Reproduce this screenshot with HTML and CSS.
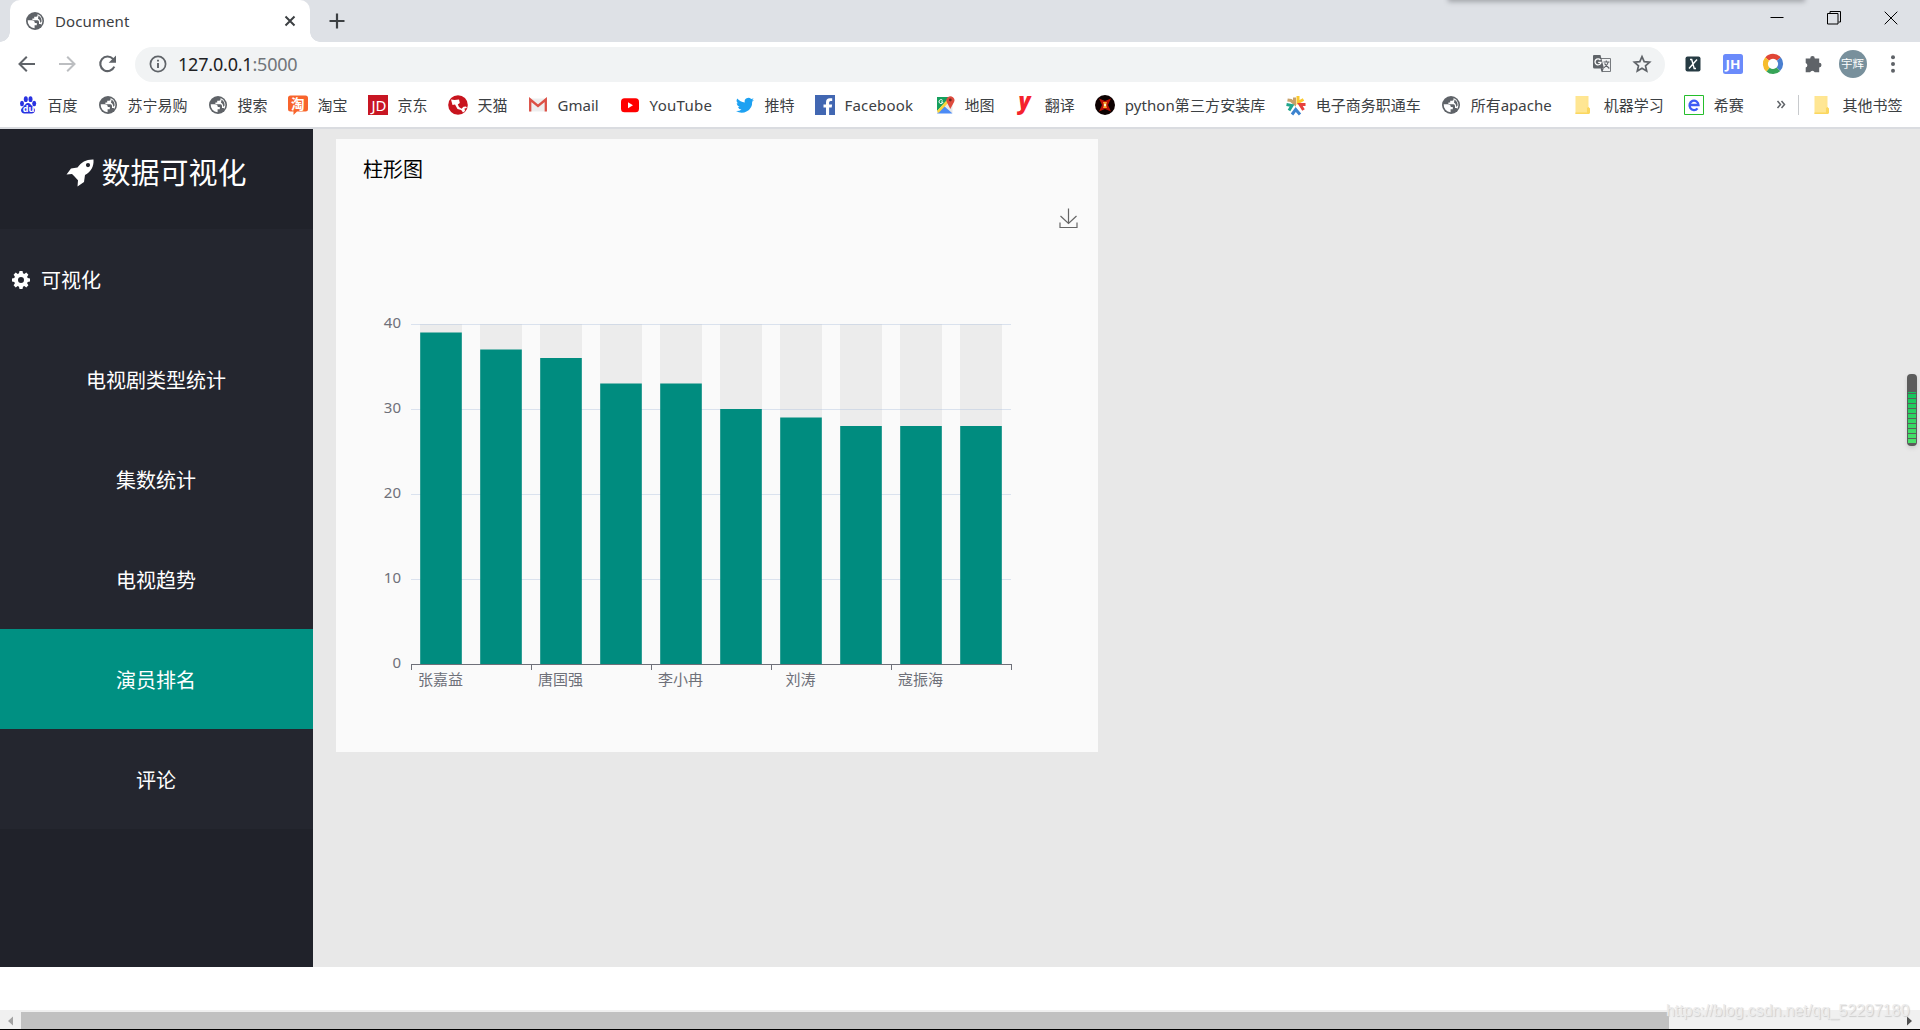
FILE: index.html
```html
<!DOCTYPE html>
<html lang="zh-CN">
<head>
<meta charset="utf-8">
<title>Document</title>
<link rel="stylesheet" href="styles.css">
</head>
<body>
<svg class="defs" width="0" height="0">
  <symbol id="globe" viewBox="0 0 20 20">
    <circle cx="10" cy="10" r="9" fill="#5f6368"/>
    <path d="M2.700 9.300H6.500Q9.800 9.300 9.800 12H11.800V14.300H9.600V17.300A7.400 7.400 0 0 1 2.700 9.300Z" fill="#fff"/>
    <path d="M12.600 3.100V4.200Q12.600 5.800 10.800 5.800H9.200V7.600H7.400V9.300H12.400Q14 9.300 14 11V13H15.600L16.200 14A7.400 7.400 0 0 0 12.600 3.100Z" fill="#fff"/>
    <path d="M13.500 4.500Q16.800 6.500 16.600 10.500L15.300 12Q15 8.200 13 7.800z" fill="#5f6368"/>
  </symbol>
  <symbol id="folder" viewBox="0 0 20 20">
    <path d="M1.500 1h13v11.500l1.500 1.500v4l-1.500 1h-13z" fill="#ffe58f"/>
    <path d="M1.500 17.500h11.500v-4.500l1.500-1 1.500 1.500v4.200l-1 1.300H1.500z" fill="#fbd75f"/>
    <path d="M2.500 16.800H12V1.500H2.500z" fill="#ffe693"/>
  </symbol>
</svg>

<div class="window">
  <header class="tabs">
    <div class="tab">
      <svg class="ic20"><use href="#globe"/></svg>
      <span class="tab-title">Document</span>
      <svg class="tab-close" viewBox="0 0 12 12"><path d="M1.500 1.500l9 9M10.500 1.500l-9 9" stroke="#3c4043" stroke-width="2"/></svg>
    </div>
    <svg class="tab-new" viewBox="0 0 16 16"><path d="M8 .5v15M.5 8h15" stroke="#3c4043" stroke-width="2.200"/></svg>
    <div class="controls">
      <svg viewBox="0 0 14 14"><path d="M.5 6.500h13" stroke="#000"/></svg>
      <svg viewBox="0 0 14 14"><path d="M.5 2.500h10.500v10.500H.5zM3 2V.5h10.500v10.500H11.500" stroke="#000" fill="none"/></svg>
      <svg viewBox="0 0 14 14"><path d="M.7.7l12.600 12.600M13.300.7L.7 13.300" stroke="#000"/></svg>
    </div>
    <div class="top-shadow"></div>
  </header>

  <div class="toolbar">
    <svg class="nav" viewBox="0 0 20 20"><path d="M18 10H3M9.800 2.700L2.500 10l7.300 7.300" stroke="#5f6368" stroke-width="2" fill="none"/></svg>
    <svg class="nav" viewBox="0 0 20 20"><path d="M2 10h15M10.200 2.700L17.500 10l-7.300 7.300" stroke="#bcbec1" stroke-width="2" fill="none"/></svg>
    <svg class="nav" viewBox="0 0 20 20"><path d="M17.300 12.700A7.300 7.300 0 1 1 16 4.900L17.500 6.700" stroke="#5f6368" stroke-width="2.100" fill="none"/><path d="M19 1.500v7.300h-7.300z" fill="#5f6368"/></svg>
    <div class="omnibox">
      <svg class="info" viewBox="0 0 18 18"><circle cx="9" cy="9" r="7.600" stroke="#5f6368" stroke-width="1.700" fill="none"/><path d="M9 8v5M9 4.700v1.800" stroke="#5f6368" stroke-width="1.900"/></svg>
      <span class="url">127.0.0.1<i>:5000</i></span>
      <svg class="translate" viewBox="0 0 20 20"><path d="M8 4.500h10.500v13H10z" fill="#f1f3f4" stroke="#777a7e"/><path d="M1.500 1h7l3.500 13.500H2.500q-1.500 0-1.500-1.500V2z" fill="#5f6368"/><path d="M8.500 14.500h3.300l-1.800 4z" fill="#5f6368"/><path d="M8.400 6A3 3 0 1 0 9 8.300H6.200" fill="none" stroke="#fff" stroke-width="1.300"/><path d="M11.500 8h6M14.300 6.500V8M16.300 8q-.8 3.500-4.300 5.700M12.500 9.500l4.800 5" fill="none" stroke="#5f6368" stroke-width="1.100"/></svg>
      <svg class="star" viewBox="0 0 20 20"><path d="M10 2.700l2.200 5 5.400.5-4.100 3.600 1.200 5.300L10 14.300l-4.700 2.800 1.200-5.300-4.100-3.600 5.400-.5z" fill="none" stroke="#5f6368" stroke-width="1.700"/></svg>
    </div>
    <div class="extensions">
      <svg viewBox="0 0 20 20"><rect x="2.500" y="2.500" width="15" height="15" rx="2" fill="#263b43"/><path d="M7 5.500h1.700l2.500 9H13M14 5.500L6 14.500" stroke="#fff" stroke-width="1.400" fill="none"/></svg>
      <svg viewBox="0 0 20 20"><rect width="20" height="20" rx="2.500" fill="#6b8bfb"/><text x="2.500" y="15" textLength="15" lengthAdjust="spacingAndGlyphs" class="jh">JH</text></svg>
      <svg viewBox="0 0 20 20" fill="none" stroke-width="5"><path d="M4.200 5A7.500 7.500 0 0 1 15.800 5" stroke="#e04637"/><path d="M15.800 5A7.500 7.500 0 0 1 15.300 15.300" stroke="#4a7fd0"/><path d="M15.300 15.300A7.500 7.500 0 0 1 5 15.600" stroke="#37a457"/><path d="M5 15.600A7.500 7.500 0 0 1 4.200 5" stroke="#f6bd2c"/></svg>
      <svg viewBox="0 0 20 20"><path d="M2 5.200h4.500a2.300 2.300 0 1 1 4.600 0H15.500v4.400a2.300 2.300 0 1 1 0 4.600V19H11a2.500 2.500 0 0 0-4.600 0H2v-4.600a2.500 2.500 0 0 0 0-4.700z" transform="translate(.7 -.8)" fill="#5f6368"/></svg>
      <span class="avatar">宇辉</span>
      <svg class="dots" viewBox="0 0 20 20" fill="#5f6368"><circle cx="10" cy="3.300" r="2"/><circle cx="10" cy="10" r="2"/><circle cx="10" cy="16.800" r="2"/></svg>
    </div>
  </div>

  <nav class="bookmarks">
    <a><svg viewBox="0 0 20 20" fill="#2932e1"><ellipse cx="4" cy="8.500" rx="2" ry="2.700"/><ellipse cx="7.800" cy="4.200" rx="2" ry="2.900"/><ellipse cx="12.500" cy="4.200" rx="2" ry="2.900"/><ellipse cx="16.200" cy="8.500" rx="2" ry="2.700"/><path d="M10 8c2 0 3 2 4.500 3.500 2.500 2.300 3 3.500 2 5.500-1.200 2-3.500 1.500-6.500 1.500S4.700 19 3.500 17c-1-2-.5-3.200 2-5.500C7 10 8 8 10 8z"/><text x="4.800" y="17" class="du">du</text></svg><span>百度</span></a>
    <a><svg><use href="#globe"/></svg><span>苏宁易购</span></a>
    <a><svg><use href="#globe"/></svg><span>搜索</span></a>
    <a><svg viewBox="0 0 20 20"><path d="M2.500.5h15Q20 .5 20 3v11q0 2.500-2.500 2.500H9L5.500 20v-3.500h-3Q0 16.500 0 14V3Q0 .5 2.500.5z" fill="#f8642c"/><text x="3" y="13.500" class="tao">淘</text></svg><span>淘宝</span></a>
    <a><svg viewBox="0 0 20 20"><path d="M0 0h20v20H0z" fill="#c81623"/><text x="3.500" y="15.500" textLength="15" lengthAdjust="spacingAndGlyphs" class="jd">JD</text></svg><span>京东</span></a>
    <a><svg viewBox="0 0 20 20"><circle cx="10" cy="10" r="9.800" fill="#c8141e"/><path d="M3 4.500l3.500.5 4.500-.5.800 3.500-2 1.500 1.200 2.500 2.500 1.700 2-2 2.500-.3 1 1.500-2.500.5.500 2.500-2 1.500-1.800-2.500L9.500 14 7 9.500 4.500 10z" fill="#fff"/></svg><span>天猫</span></a>
    <a><svg viewBox="0 0 20 20"><path d="M1.500 3.500h17v13h-17z" fill="#eee"/><path d="M2.200 16.500V4.500L10 11l7.800-6.500v12" fill="none" stroke="#dc5045" stroke-width="2.300"/></svg><span class="w-gmail">Gmail</span></a>
    <a><svg viewBox="0 0 20 20"><rect x="1" y="3.200" width="18" height="14" rx="3.500" fill="#f00"/><path d="M8 7.200v6l5-3z" fill="#fff"/></svg><span class="w-youtube">YouTube</span></a>
    <a><svg viewBox="0 0 24 24"><path d="M22.800 5.600a9 9 0 0 1-2.600.7 4.500 4.500 0 0 0 2-2.500 9 9 0 0 1-2.800 1.100A4.400 4.400 0 0 0 11.800 9 12.600 12.600 0 0 1 2.700 4.300a4.400 4.400 0 0 0 1.400 6 4.400 4.400 0 0 1-2-.6c0 2.200 1.500 4 3.500 4.500a4.400 4.400 0 0 1-2 .1 4.400 4.400 0 0 0 4.200 3A9 9 0 0 1 1.200 19.200 12.600 12.600 0 0 0 20.600 8a9 9 0 0 0 2.200-2.400z" fill="#1da1f2"/></svg><span>推特</span></a>
    <a><svg viewBox="0 0 20 20"><path d="M0 0h20v20H0z" fill="#4267b2"/><path d="M11 20v-7.500H8.500v-3H11V7.300q0-4 4-4h2.200V6h-1.600q-1.500 0-1.500 1.500v2h3l-.4 3h-2.600V20z" fill="#fff"/></svg><span class="w-facebook">Facebook</span></a>
    <a><svg viewBox="0 0 20 20"><path d="M2 2h15.500v16H2z" fill="#e8e8e8"/><path d="M2 2h13L2 16z" fill="#159f5d"/><path d="M2 18.500L9 11l8.500 7.500z" fill="#4c8bf5"/><path d="M2 16L12 5l2 2L3.500 18z" fill="#fdd53b"/><path d="M15.300 14L12 7.500a4 4 0 1 1 6.800 0z" fill="#de4b3e"/><circle cx="15.300" cy="5" r="1.400" fill="#702820"/><path d="M7.700 5.500A2 2 0 1 0 8 7H6" stroke="#fff" fill="none"/></svg><span>地图</span></a>
    <a><svg viewBox="0 0 20 20"><text x="3.500" y="13.500" class="you">y</text></svg><span>翻译</span></a>
    <a><svg viewBox="0 0 20 20"><circle cx="10" cy="10" r="10" fill="#0d0202"/><path d="M4 3.500l6 2.500 6-2.500-3 6.500 3 6.500-6-2.500-6 2.500 3-6.500z" fill="#b71206"/><path d="M8 7h4l-1 3 1 3H8l1-3z" fill="#ffa329"/><circle cx="10" cy="10" r="1.300" fill="#fff6c0"/></svg><span class="w-python">python第三方安装库</span></a>
    <a><svg viewBox="0 0 20 20" fill="none" stroke-width="3"><path d="M1.500 5l3.500.5 3.500 3V2.500" stroke="#c7a16a"/><path d="M12 1v6.500l5.500-3" stroke="#fbc92e"/><path d="M19.500 9.500H14l3.500 5.500" stroke="#e7413c"/><path d="M.5 9.500l5.500 1-3 5" stroke="#20a58c"/><path d="M6 19.500l3.700-5 4.300 5" stroke="#3c83cf"/></svg><span>电子商务职通车</span></a>
    <a><svg><use href="#globe"/></svg><span class="w-apache">所有apache</span></a>
    <a class="tight"><svg><use href="#folder"/></svg><span>机器学习</span></a>
    <a><svg viewBox="0 0 20 20"><path d="M.5.500h19v19H.5z" fill="#fff" stroke="#25be2b"/><path d="M5.500 10H14.500A4.500 4.800 0 1 0 13.500 13.400" fill="none" stroke="#3e5cf5" stroke-width="2.300"/></svg><span>希赛</span></a>
    <svg class="more" viewBox="0 0 10 10"><path d="M1.500 1L4.500 4.500l-3 3.500M5.500 1L8.500 4.500l-3 3.500" fill="none" stroke="#5f6368" stroke-width="1.500"/></svg>
    <div class="divider"></div>
    <a><svg><use href="#folder"/></svg><span>其他书签</span></a>
  </nav>

  <div class="page">
    <aside class="sidebar">
      <h1 class="brand"><svg viewBox="0 0 28 28"><path d="M27.500.5C20 .3 15.500 3 11.500 8.500L5 9.500.5 15.500l5.500-.4 2.300 2.200 2.500 2.600 1.200 1.300-.5 6.300 6.500-4.500 1-7C25 12.500 28 8 27.500.5zM22 8.200a2.100 2.100 0 1 1 0-4.200 2.100 2.100 0 0 1 0 4.200z" fill="#fff" fill-rule="evenodd"/></svg><span>数据可视化</span></h1>
      <ul class="menu">
        <li class="group"><svg viewBox="0 0 18 18"><path fill="#fff" fill-rule="evenodd" d="M7.500 0h3l.5 2.300 1.300.6 2-1.300 2.100 2.100-1.300 2 .6 1.300 2.300.5v3l-2.300.5-.6 1.300 1.300 2-2.100 2.100-2-1.300-1.300.6-.5 2.300h-3L7 15.700l-1.300-.6-2 1.300-2.100-2.100 1.300-2-.6-1.300L0 10.500v-3L2.300 7l.6-1.300-1.300-2 2.100-2.100 2 1.300L7 2.300zM9 6a3 3 0 1 0 0 6 3 3 0 0 0 0-6z"/></svg>可视化</li>
        <li>电视剧类型统计</li>
        <li>集数统计</li>
        <li>电视趋势</li>
        <li class="active">演员排名</li>
        <li>评论</li>
      </ul>
    </aside>
    <main class="content">
      <section class="card">
        <h2>柱形图</h2>
        <svg class="chart" width="762" height="552" viewBox="336 200 762 552">
          <g fill="#ececec">
            <path d="M420 324h42v341h-42zM480 324h42v341h-42zM540 324h42v341h-42zM600 324h42v341h-42zM660 324h42v341h-42zM720 324h42v341h-42zM780 324h42v341h-42zM840 324h42v341h-42zM900 324h42v341h-42zM960 324h42v341h-42z"/>
          </g>
          <path d="M411 324.500h600M411 409.500h600M411 494.500h600M411 579.500h600" stroke="#b4c6e0" stroke-opacity=".45"/>
          <g fill="#008c7f">
            <rect x="420.200" y="332.500" width="41.600" height="332"/>
            <rect x="480.200" y="349.500" width="41.600" height="315"/>
            <rect x="540.200" y="358" width="41.600" height="307"/>
            <rect x="600.200" y="383.500" width="41.600" height="281"/>
            <rect x="660.200" y="383.500" width="41.600" height="281"/>
            <rect x="720.200" y="409" width="41.600" height="256"/>
            <rect x="780.200" y="417.500" width="41.600" height="247"/>
            <rect x="840.200" y="426" width="41.600" height="239"/>
            <rect x="900.200" y="426" width="41.600" height="239"/>
            <rect x="960.200" y="426" width="41.600" height="239"/>
          </g>
          <path d="M411 664.500h601M411.500 665v5M531.500 665v5M651.500 665v5M771.500 665v5M891.500 665v5M1011.500 665v5" stroke="#6e7079"/>
          <g class="axis" text-anchor="end">
            <text x="401" y="328">40</text><text x="401" y="413">30</text><text x="401" y="498">20</text><text x="401" y="583">10</text><text x="401" y="668">0</text>
          </g>
          <g class="axis names" text-anchor="middle">
            <text x="440.500" y="685">张嘉益</text><text x="560.500" y="685">唐国强</text><text x="680.500" y="685">李小冉</text><text x="800.500" y="685">刘涛</text><text x="920.500" y="685">寇振海</text>
          </g>
          <path d="M1068.500 208.500v15M1060.500 216l8 7.500 8-7.500M1060 222.500v5h17v-5" fill="none" stroke="#666" stroke-width="1.200"/>
        </svg>
      </section>
    </main>
  </div>

  <div class="below"></div>
  <div class="scrollbar">
    <svg viewBox="0 0 21 18"><path d="M13 4.500v9L8 9z" fill="#a3a3a3"/></svg>
    <div class="thumb"></div>
    <svg viewBox="0 0 21 18"><path d="M8 4.500v9l5-4.500z" fill="#505050"/></svg>
  </div>
  <div class="meter"><div></div></div>
  <div class="watermark">https://blog.csdn.net/qq_52297180</div>
</div>
</body>
</html>
```

FILE: styles.css
```css
* { box-sizing: border-box; }
body { margin: 0; overflow: hidden; font-family: "Noto Sans", "Noto Sans CJK SC", sans-serif; font-size: 15px; color: #3c4043; }
svg { display: block; flex: none; overflow: visible; }
.defs { position: absolute; }
.window { position: relative; width: 1920px; height: 1030px; display: flex; flex-direction: column; background: #fff; }

.tabs { position: relative; height: 42px; flex: none; background: #dee1e6; display: flex; padding-left: 10px; }
.tab { position: relative; width: 300px; background: #fff; border-radius: 10px 10px 0 0; display: flex; align-items: center; padding: 0 15px; }
.tab::before, .tab::after { content: ""; position: absolute; bottom: 0; width: 10px; height: 10px; }
.tab::before { left: -10px; background: radial-gradient(circle at 0 0, #dee1e6 9.5px, #fff 10px); }
.tab::after { right: -10px; background: radial-gradient(circle at 100% 0, #dee1e6 9.5px, #fff 10px); }
.ic20 { width: 20px; height: 20px; }
.tab-title { margin-left: 10px; flex: 1; font-size: 15px; letter-spacing: .1px; }
.tab-close { width: 12px; height: 12px; margin-right: -1px; }
.tab-new { width: 16px; height: 16px; margin: 13px 0 0 19px; }
.controls { margin-left: auto; display: flex; gap: 43px; padding: 11px 22px 0 0; }
.controls svg { width: 14px; height: 14px; }
.top-shadow { position: absolute; left: 1450px; top: -6px; width: 353px; height: 6px; box-shadow: 0 0 5px 2px #a2a5aa; }

.toolbar { height: 45px; flex: none; display: flex; align-items: center; padding: 0 0 1px 17px; }
.nav { width: 20px; height: 20px; margin-right: 20px; }
.omnibox { width: 1530px; height: 35px; border-radius: 18px; background: #f1f3f4; display: flex; align-items: center; padding: 0 13px 0 14px; margin-left: -2px; }
.info { width: 18px; height: 18px; }
.url { flex: 1; margin-left: 11px; font-size: 18px; color: #202124; letter-spacing: -.2px; }
.url i { font-style: normal; color: #70757a; }
.translate { width: 20px; height: 20px; margin-right: 20px; }
.star { width: 20px; height: 20px; }
.extensions { display: flex; align-items: center; gap: 20px; margin-left: 17.5px; }
.extensions svg { width: 20px; height: 20px; }
.avatar { width: 28px; height: 28px; border-radius: 50%; background: #78909c; color: #fff; font: 11.5px/27px "Noto Sans CJK SC", sans-serif; text-align: center; margin: 0 -4px; }
.jh { font: bold 13px "Noto Sans", sans-serif; fill: #fff; }

.bookmarks { height: 42px; flex: none; display: flex; align-items: center; gap: 20px; padding: 0 17px 4px 18px; border-bottom: 2px solid #dadce0; }
.bookmarks a { display: flex; align-items: center; gap: 10px; white-space: nowrap; line-height: 20px; }
.bookmarks a.tight { margin: 0 0 0 -1px; }
.bookmarks a svg { width: 20px; height: 20px; }
.bookmarks a span { font-size: 15px; margin: 0 .5px 0 -.5px; }
.bookmarks .w-gmail { width: 42px; }
.bookmarks .w-youtube { width: 65px; letter-spacing: .3px; }
.bookmarks .w-facebook { width: 70px; letter-spacing: .15px; }
.bookmarks .w-python { width: 141px; letter-spacing: .1px; }
.bookmarks .w-apache { width: 84px; }
.more { width: 10px; height: 10px; margin-left: auto; }
.divider { width: 1px; height: 20px; background: #c8cacd; margin: 0 -6.5px 0 -8px; }
.du { font: bold 9px "Noto Sans", sans-serif; fill: #fff; }
.tao { font: bold 13.5px "Noto Sans CJK SC", sans-serif; fill: #fff; }
.jd { font: 15px "Noto Sans", sans-serif; fill: #fff; }
.you { font: italic 900 22px "Open Sans", sans-serif; fill: #f5222d; }

.page { height: 838px; flex: none; display: flex; background: #e8e8e8; font-family: "Noto Sans CJK SC", sans-serif; }
.sidebar { width: 313px; background: #20222a; color: #fff; }
.brand { margin: 0; height: 100px; display: flex; justify-content: center; gap: 7px; font-weight: 400; font-size: 29px; line-height: 85px; }
.brand svg { width: 28px; height: 28px; margin-top: 30px; }
.menu { margin: 0; padding: 0; list-style: none; background: #24262f; font-size: 20px; font-weight: 400; }
.menu li { height: 100px; display: flex; align-items: center; justify-content: center; padding-right: 1px; }
.menu .group { justify-content: flex-start; padding-left: 11.5px; gap: 11.5px; }
.menu .group svg { width: 18px; height: 18px; margin-top: 1px; }
.menu .active { background: #009082; }
.content { padding: 10px 0 0 23px; }
.card { width: 762px; height: 613px; background: #fafafa; color: #000; }
.card h2 { margin: 0; height: 61px; padding-left: 27px; font-size: 20px; font-weight: 400; line-height: 60px; }
.axis { font: 15px "Noto Sans", "Noto Sans CJK SC", sans-serif; fill: #6e7079; }
.names { font-size: 15px; }

.below { height: 43px; flex: none; }
.scrollbar { height: 20px; flex: none; background: #f0f0f0; display: flex; align-items: center; border-bottom: 1px solid #000; padding-top: 2px; }
.scrollbar svg { width: 21px; height: 18px; }
.thumb { width: 1648px; height: 17px; background: #c1c1c1; margin-right: auto; }
.meter { position: absolute; left: 1907px; top: 374px; width: 10px; height: 72px; border-radius: 4px; background: #5c5c5c; padding: 18px 1px 3px; box-shadow: 0 2px 4px #ccc; }
.meter div { height: 51px; background: repeating-linear-gradient(#0000 0 1px, #5c5c5c 1px 2px, #0000 2px 4px, #0000 4px 5px), linear-gradient(#13c35b, #4be36b); }
.watermark { position: absolute; left: 1666px; top: 1001px; font: 16px/20px "Liberation Sans", sans-serif; letter-spacing: -.07px; color: #ececec; text-shadow: 1px 1px 1px #ccc; white-space: nowrap; }
```
